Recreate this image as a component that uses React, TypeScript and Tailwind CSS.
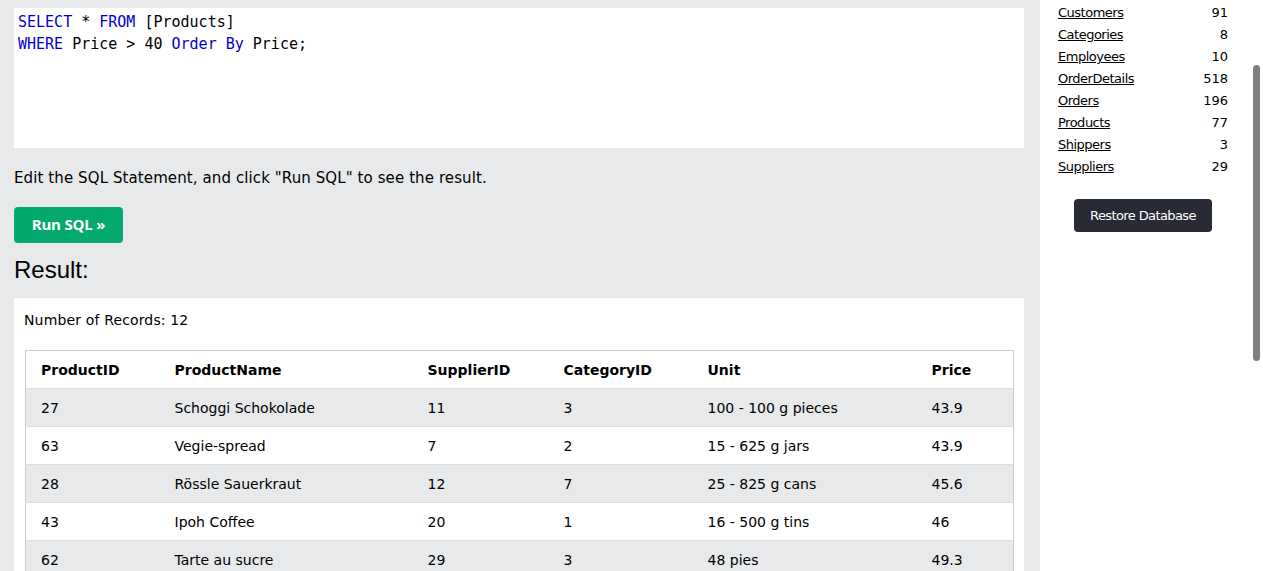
const rows = [
  ['27', 'Schoggi Schokolade', '11', '3', '100 - 100 g pieces', '43.9'],
  ['63', 'Vegie-spread', '7', '2', '15 - 625 g jars', '43.9'],
  ['28', 'Rössle Sauerkraut', '12', '7', '25 - 825 g cans', '45.6'],
  ['43', 'Ipoh Coffee', '20', '1', '16 - 500 g tins', '46'],
  ['62', 'Tarte au sucre', '29', '3', '48 pies', '49.3'],
  ['64', 'Wimmers gute Semmelknödel', '12', '5', '20 bags x 4 pieces', '33.25'],
]

const tables = [
  ['Customers', 91],
  ['Categories', 8],
  ['Employees', 10],
  ['OrderDetails', 518],
  ['Orders', 196],
  ['Products', 77],
  ['Shippers', 3],
  ['Suppliers', 29],
]

const headers = ['ProductID', 'ProductName', 'SupplierID', 'CategoryID', 'Unit', 'Price']
const colW = ['w-[134px]', 'w-[253px]', 'w-[136px]', 'w-[144px]', 'w-[224px]', 'w-[97px]']

export default function App() {
  return (
    <div className="flex h-[571px] overflow-hidden font-['DejaVu_Sans',Verdana,sans-serif] text-black">
      <div className="w-[1040px] shrink-0 bg-[#e7e9eb] pl-[14px] pr-[16px] pt-[8px]">
        <div className="h-[140px] bg-white pl-[4px] pt-[3px] font-['DejaVu_Sans_Mono',monospace] text-[15px] leading-[22px]">
          <div>
            <span className="text-[#0000cd]">SELECT</span> * <span className="text-[#0000cd]">FROM</span> [Products]
          </div>
          <div>
            <span className="text-[#0000cd]">WHERE</span> Price &gt; 40 <span className="text-[#0000cd]">Order By</span> Price;
          </div>
        </div>

        <p className="mt-[19px] text-[15px] leading-[22px] tracking-[0.1px]">Edit the SQL Statement, and click "Run SQL" to see the result.</p>

        <button className="mt-[18px] flex h-[36px] w-[109px] items-center justify-center rounded-[4px] bg-[#04aa6d] pb-px font-['Open_Sans',sans-serif] text-[15px] font-bold tracking-[-0.2px] text-white">
          Run SQL »
        </button>

        <h2 className="mt-[11px] font-['Liberation_Sans',Arial,sans-serif] text-[24px] leading-[32px]">Result:</h2>

        <div className="mt-[12px] bg-white px-[11px] pt-[12px] pb-4">
          <div className="-ml-px text-[14px] leading-[20px] tracking-[0.15px]">Number of Records: 12</div>
          <table className="mt-[20px] w-[988px] table-fixed border-collapse border border-[#cccccc] text-[14px]">
            <thead>
              <tr className="h-[38px] border-b border-[#dddddd] bg-white">
                {headers.map((h, i) => (
                  <th key={h} className={`${colW[i]} pl-[15px] pt-[2px] text-left font-bold`}>
                    {h}
                  </th>
                ))}
              </tr>
            </thead>
            <tbody>
              {rows.map((r, ri) => (
                <tr key={ri} className={`h-[38px] border-b border-[#dddddd] ${ri % 2 === 0 ? 'bg-[#e7e9eb]' : 'bg-white'}`}>
                  {r.map((c, ci) => (
                    <td key={ci} className="pl-[15px] pt-[2px] whitespace-nowrap">
                      {c}
                    </td>
                  ))}
                </tr>
              ))}
            </tbody>
          </table>
        </div>
      </div>

      <div className="relative flex-1 bg-white pt-[2px]">
        <div className="ml-[18px] w-[170px] text-[13px]">
          {tables.map(([name, n]) => (
            <div key={name} className="flex h-[22px] items-center justify-between">
              <a href="#" className="underline tracking-[-0.5px]">
                {name}
              </a>
              <span>{n}</span>
            </div>
          ))}
          <div className="mt-[21px] flex justify-center">
            <button className="h-[33px] w-[138px] rounded-[4px] bg-[#282a35] text-[13px] tracking-[-0.6px] text-white">Restore Database</button>
          </div>
        </div>
        <div className="absolute right-[3px] top-[65px] h-[296px] w-[7px] rounded-full bg-[#808080]" />
      </div>
    </div>
  )
}
